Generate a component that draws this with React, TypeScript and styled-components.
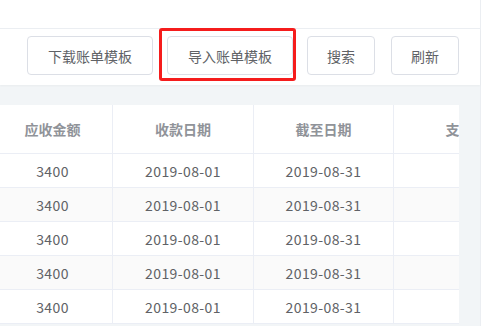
import styled, { createGlobalStyle } from "styled-components"

const Global = createGlobalStyle`
  html, body {
    margin: 0;
    padding: 0;
    background: #fff;
    font-family: "Noto Sans CJK SC", "Noto Sans", sans-serif;
  }
`

const rows = [1, 2, 3, 4, 5].map(() => ({
  amount: "3400",
  start: "2019-08-01",
  end: "2019-08-31",
}))

const App = () => {
  return (
    <>
      <Global />
      <Page>
        <Main>
          <TopBar />
          <Toolbar>
            <Button>下载账单模板</Button>
            <Button marked>导入账单模板</Button>
            <Button narrow>搜索</Button>
            <Button narrow>刷新</Button>
          </Toolbar>
          <Content>
            <Table>
              <Row header>
                <Cell header first>应收金额</Cell>
                <Cell header>收款日期</Cell>
                <Cell header>截至日期</Cell>
                <Cell header>支付状态</Cell>
              </Row>
              {rows.map((r, i) => (
                <Row key={i} striped={i % 2 === 1}>
                  <Cell first>{r.amount}</Cell>
                  <Cell>{r.start}</Cell>
                  <Cell>{r.end}</Cell>
                  <Cell />
                </Row>
              ))}
            </Table>
          </Content>
        </Main>
        <Side />
      </Page>
    </>
  )
}

export default App

const Page = styled.div`
  display: flex;
  width: 498px;
  height: 326px;
  overflow: hidden;
`

const Main = styled.div`
  width: 480px;
  flex-shrink: 0;
  display: flex;
  flex-direction: column;
  border-right: 1px solid #ebeef2;
`

const Side = styled.div`
  flex: 1;
  background: #fff;
`

const TopBar = styled.div`
  height: 28px;
  background: #fff;
  border-bottom: 1px solid #ebeef2;
`

const Toolbar = styled.div`
  height: 56px;
  box-sizing: border-box;
  padding: 7px 0 0 27px;
  display: flex;
  align-items: flex-start;
  gap: 14px;
  background: #fff;
  box-shadow: 0 1px 2px rgba(0, 0, 0, 0.04);
  position: relative;
`

const Button = styled.div<{ narrow?: boolean; marked?: boolean }>`
  position: relative;
  box-sizing: border-box;
  width: ${(p) => (p.narrow ? "68px" : "126px")};
  height: 39px;
  margin-right: ${(p) => (p.narrow ? "2px" : "0")};
  display: flex;
  align-items: center;
  justify-content: center;
  border: 1px solid #dcdfe6;
  border-radius: 4px;
  background: #fff;
  color: #606266;
  font-size: 14px;

  ${(p) =>
    p.marked &&
    `
    &::after {
      content: "";
      position: absolute;
      top: -9px;
      left: -9px;
      right: -4px;
      bottom: -7px;
      border: 3px solid #f51c1c;
      border-radius: 3px;
    }
  `}
`

const Content = styled.div`
  flex: 1;
  background: #f2f5f7;
  padding: 20px 21px 0 0;
  overflow: hidden;
`

const Table = styled.div`
  width: 459px;
  overflow: hidden;
  background: #fff;
`

const Row = styled.div<{ header?: boolean; striped?: boolean }>`
  display: grid;
  grid-template-columns: 113px 141px 140px 160px;
  height: ${(p) => (p.header ? "49px" : "34px")};
  background: ${(p) => (p.striped ? "#fafafa" : "#fff")};
  border-bottom: 1px solid #ebeef5;
  box-sizing: border-box;
`

const Cell = styled.div<{ header?: boolean; first?: boolean }>`
  display: flex;
  align-items: center;
  justify-content: center;
  box-sizing: border-box;
  padding-right: ${(p) => (p.first ? "7px" : "0")};
  border-right: 1px solid #ebeef5;
  font-size: 14px;
  letter-spacing: ${(p) => (p.header ? "0" : "0.4px")};
  white-space: nowrap;
  color: ${(p) => (p.header ? "#909399" : "#606266")};
  font-weight: ${(p) => (p.header ? 700 : 400)};
`
